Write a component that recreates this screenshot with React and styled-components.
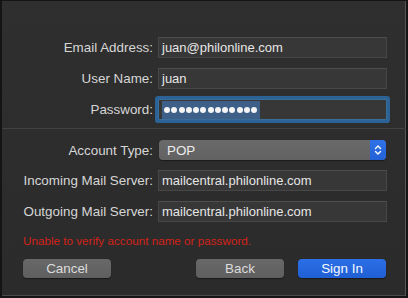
import React from 'react'
import styled, { createGlobalStyle } from 'styled-components'

const Global = createGlobalStyle`
  html, body { margin: 0; padding: 0; background: #1c1c1c; }
  body { font-family: "Liberation Sans", Arial, sans-serif; }
`

const Window = styled.div`
  box-sizing: border-box;
  width: 408px;
  height: 298px;
  background: linear-gradient(#2f2f2f, #2b2b2b);
  border-top: 1px solid #141414;
  border-left: 2px solid #141414;
  border-right: 2px solid #151515;
  border-bottom: 2px solid #151515;
  box-shadow: inset -1px 0 0 #555, inset 0 -1px 0 #4a4a4a;
  padding-top: 36px;
  display: flex;
  flex-direction: column;
`

const Form = styled.div`
  display: grid;
  grid-template-columns: 151px 229px;
  column-gap: 5px;
  row-gap: 10px;
  align-items: center;
`

const Label = styled.label`
  text-align: right;
  font-size: 13.4px;
  color: #d6d6d6;
  white-space: nowrap;
`

const Field = styled.div`
  box-sizing: border-box;
  height: 21px;
  background: #373737;
  border: 1px solid #474747;
  border-top-color: #4e4e4e;
  color: #e6e6e6;
  font-size: 13px;
  padding-left: 3px;
  display: flex;
  align-items: center;
  ${p => p.$focused && `
    border-color: #3b6d99;
    box-shadow: 0 0 0 3px #2c6396;
    border-radius: 1px;
  `}
`

const Selection = styled.span`
  display: flex;
  align-items: center;
  gap: 1.25px;
  height: 18px;
  box-sizing: border-box;
  background: #3e5f88;
  padding: 0 3px 0 2px;
`

const Dot = styled.span`
  width: 6px;
  height: 6px;
  border-radius: 50%;
  background: #f4f4f4;
`

const Separator = styled.hr`
  border: none;
  height: 1px;
  background: #414141;
  margin: 8px 0 11px;
  width: 100%;
`

const Popup = styled.div`
  box-sizing: border-box;
  height: 20px;
  margin: 0 1px;
  border-radius: 4px;
  background: linear-gradient(#6a6a6a, #626262);
  color: #ececec;
  font-size: 13.4px;
  display: flex;
  align-items: center;
  justify-content: space-between;
  padding-left: 8px;
  overflow: hidden;
  box-shadow: 0 0.5px 1px rgba(0,0,0,0.4);
`

const Stepper = styled.span`
  width: 16px;
  height: 100%;
  background: linear-gradient(#2f72e8, #2361d6);
  display: flex;
  align-items: center;
  justify-content: center;
`

const ErrorText = styled.div`
  color: #d42219;
  font-size: 11.7px;
  margin: 12px 0 0 21px;
`

const Buttons = styled.div`
  display: flex;
  margin: 12px 0 0 21px;
  gap: 14px;
`

const Button = styled.button`
  width: 88px;
  height: 19px;
  border: none;
  border-radius: 4px;
  font-family: inherit;
  font-size: 13.4px;
  color: ${p => (p.$primary ? '#f4f8ff' : '#dcdcdc')};
  background: ${p => (p.$primary ? 'linear-gradient(#2c6fe6, #205fd4)' : 'linear-gradient(#686868, #5f5f5f)')};
  box-shadow: 0 0.5px 1px rgba(0,0,0,0.45);
  padding: 0;
  ${p => p.$push && 'margin-left: 71px;'}
`

export default function App() {
  return (
    <>
      <Global />
      <Window>
        <Form>
          <Label>Email Address:</Label>
          <Field>juan@philonline.com</Field>
          <Label>User Name:</Label>
          <Field>juan</Field>
          <Label>Password:</Label>
          <Field $focused>
            <Selection>
              {Array.from({ length: 13 }).map((_, i) => (
                <Dot key={i} />
              ))}
            </Selection>
          </Field>
        </Form>
        <Separator />
        <Form>
          <Label>Account Type:</Label>
          <Popup>
            POP
            <Stepper>
              <svg width="8" height="12" viewBox="0 0 8 12" fill="none" stroke="#fff" strokeWidth="1.4" strokeLinecap="round" strokeLinejoin="round">
                <path d="M1.5 4.5 L4 2 L6.5 4.5" />
                <path d="M1.5 7.5 L4 10 L6.5 7.5" />
              </svg>
            </Stepper>
          </Popup>
          <Label>Incoming Mail Server:</Label>
          <Field>mailcentral.philonline.com</Field>
          <Label>Outgoing Mail Server:</Label>
          <Field>mailcentral.philonline.com</Field>
        </Form>
        <ErrorText>Unable to verify account name or password.</ErrorText>
        <Buttons>
          <Button>Cancel</Button>
          <Button $push>Back</Button>
          <Button $primary>Sign In</Button>
        </Buttons>
      </Window>
    </>
  )
}
